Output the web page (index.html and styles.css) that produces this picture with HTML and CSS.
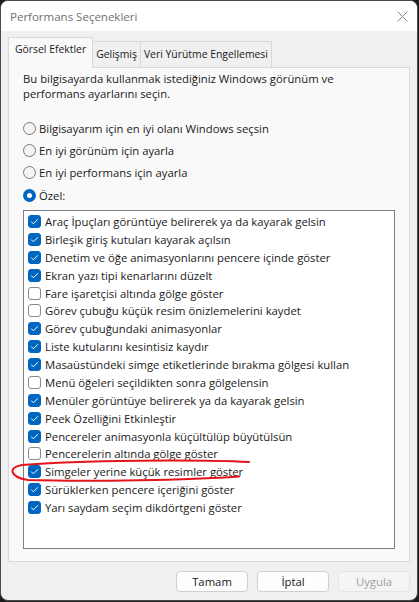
FILE: index.html
```html
<!DOCTYPE html>
<html>
	<head>
		<meta charset="utf-8">
		<link rel="stylesheet" href="styles.css">
	</head>
	<body>
		<div class="window">
			<div class="titlebar">
				<span class="title">Performans Seçenekleri</span>
				<svg class="close" width="11" height="11" viewBox="0 0 11 11"><path d="M0.5 0.5 L10.5 10.5 M10.5 0.5 L0.5 10.5" stroke="#8a8a8a" stroke-width="1" fill="none"/></svg>
			</div>
			<div class="content">
				<div class="tabs">
					<div class="tab active">Görsel Efektler</div>
					<div class="tab">Gelişmiş</div>
					<div class="tab">Veri Yürütme Engellemesi</div>
				</div>
				<div class="panel">
					<p class="intro">Bu bilgisayarda kullanmak istediğiniz Windows görünüm ve performans ayarlarını seçin.</p>
					<div class="radios">
						<div class="radio"><span class="circle"></span>Bilgisayarım için en iyi olanı Windows seçsin</div>
						<div class="radio"><span class="circle"></span>En iyi görünüm için ayarla</div>
						<div class="radio"><span class="circle"></span>En iyi performans için ayarla</div>
						<div class="radio"><span class="circle on"></span>Özel:</div>
					</div>
					<div class="listbox">
						<div class="item"><span class="box on"></span>Araç İpuçları görüntüye belirerek ya da kayarak gelsin</div>
						<div class="item"><span class="box on"></span>Birleşik giriş kutuları kayarak açılsın</div>
						<div class="item"><span class="box on"></span>Denetim ve öğe animasyonlarını pencere içinde göster</div>
						<div class="item"><span class="box on"></span>Ekran yazı tipi kenarlarını düzelt</div>
						<div class="item"><span class="box"></span>Fare işaretçisi altında gölge göster</div>
						<div class="item"><span class="box"></span>Görev çubuğu küçük resim önizlemelerini kaydet</div>
						<div class="item"><span class="box on"></span>Görev çubuğundaki animasyonlar</div>
						<div class="item"><span class="box on"></span>Liste kutularını kesintisiz kaydır</div>
						<div class="item"><span class="box on"></span>Masaüstündeki simge etiketlerinde bırakma gölgesi kullan</div>
						<div class="item"><span class="box"></span>Menü öğeleri seçildikten sonra gölgelensin</div>
						<div class="item"><span class="box on"></span>Menüler görüntüye belirerek ya da kayarak gelsin</div>
						<div class="item"><span class="box on"></span>Peek Özelliğini Etkinleştir</div>
						<div class="item"><span class="box on"></span>Pencereler animasyonla küçültülüp büyütülsün</div>
						<div class="item"><span class="box"></span>Pencerelerin altında gölge göster</div>
						<div class="item"><span class="box on"></span>Simgeler yerine küçük resimler göster</div>
						<div class="item"><span class="box on"></span>Sürüklerken pencere içeriğini göster</div>
						<div class="item"><span class="box on"></span>Yarı saydam seçim dikdörtgeni göster</div>
					</div>
				</div>
				<div class="buttons">
					<div class="btn">Tamam</div>
					<div class="btn">İptal</div>
					<div class="btn disabled">Uygula</div>
				</div>
			</div>
			<!-- red marker drawn over the screenshot -->
			<svg class="marker" width="419" height="602" viewBox="0 0 419 602">
				<path d="M249 462 C 200 459.5, 80 460, 22 465 C 8 467, 9 477, 28 480 C 90 482, 190 480, 239 476.5" stroke="#e3141b" stroke-width="2" fill="none" stroke-linecap="round"/>
			</svg>
		</div>
	</body>
</html>
```

FILE: styles.css
```css
body {
	margin: 0; background: #1c1c1c; font-family: "Open Sans", "Noto Sans", sans-serif; font-size: 11.3px; color: #1a1a1a;
}
.window {
	position: relative; width: 416px; height: 599px; background: #f0f0f0; border: 1px solid #4a4a4a; border-radius: 8px; overflow: hidden;
}
.titlebar {
	height: 30px; background: #ffffff; display: flex; align-items: center; justify-content: space-between; padding: 0 9px 0 9px;
}
.title {
	color: #707070; font-size: 11.5px;
}
.close {
	margin-top: 1px;
}
.content {
	padding: 0 7px 0 7px;
}
.tabs {
	display: flex; align-items: flex-end; height: 36px; position: relative; z-index: 1; font-size: 10.4px;
}
.tab {
	height: 25px; line-height: 24px; padding: 0 3px; border: 1px solid #d9d9d9; border-bottom: none; border-left: none; background: #f0f0f0;
}
.tab.active {
	height: 30px; line-height: 22px; padding: 0 6px; border-left: 1px solid #d9d9d9; background: #f9f9f9; margin-bottom: -1px;
}
.panel {
	height: 490px; background: #f9f9f9; border: 1px solid #d9d9d9; padding: 3px 14px 0 14px;
}
.intro {
	margin: 0; line-height: 15px; width: 330px;
}
.radios {
	margin-top: 16px;
}
.radio {
	height: 22.4px; display: flex; align-items: center;
}
.circle {
	width: 11px; height: 11px; border: 1px solid #7a7a7a; border-radius: 50%; background: #f4f4f4; margin-right: 3px;
}
.circle.on {
	width: 5px; height: 5px; border: 4px solid #0067c0; background: #fff;
}
.listbox {
	margin-top: 3px; height: 335px; background: #fff; border: 1px solid #7f7f7f; padding-top: 2px;
}
.item {
	height: 17.88px; display: flex; align-items: center; padding-left: 4px; white-space: nowrap;
}
.box {
	width: 11px; height: 11px; border: 1px solid #8a8a8a; border-radius: 3px; background: #fff; margin-right: 4px; flex: none;
}
.box.on {
	border-color: #0067c0; background: #0067c0 url("data:image/svg+xml,%3Csvg xmlns='http://www.w3.org/2000/svg' width='11' height='11'%3E%3Cpath d='M2.2 5.6 L4.4 7.8 L8.9 3.3' stroke='white' stroke-width='1' fill='none'/%3E%3C/svg%3E") no-repeat center;
}
.buttons {
	display: flex; justify-content: flex-end; gap: 9px; margin-top: 9px; padding-right: 0px;
}
.btn {
	width: 70px; height: 19px; line-height: 19px; text-align: center; background: #fdfdfd; border: 1px solid #d0d0d0; border-radius: 4px; color: #1a1a1a;
}
.btn.disabled {
	background: #f5f5f5; border-color: #e5e5e5; color: #a0a0a0;
}
.marker {
	position: absolute; left: -1px; top: -1px; pointer-events: none;
}
```
